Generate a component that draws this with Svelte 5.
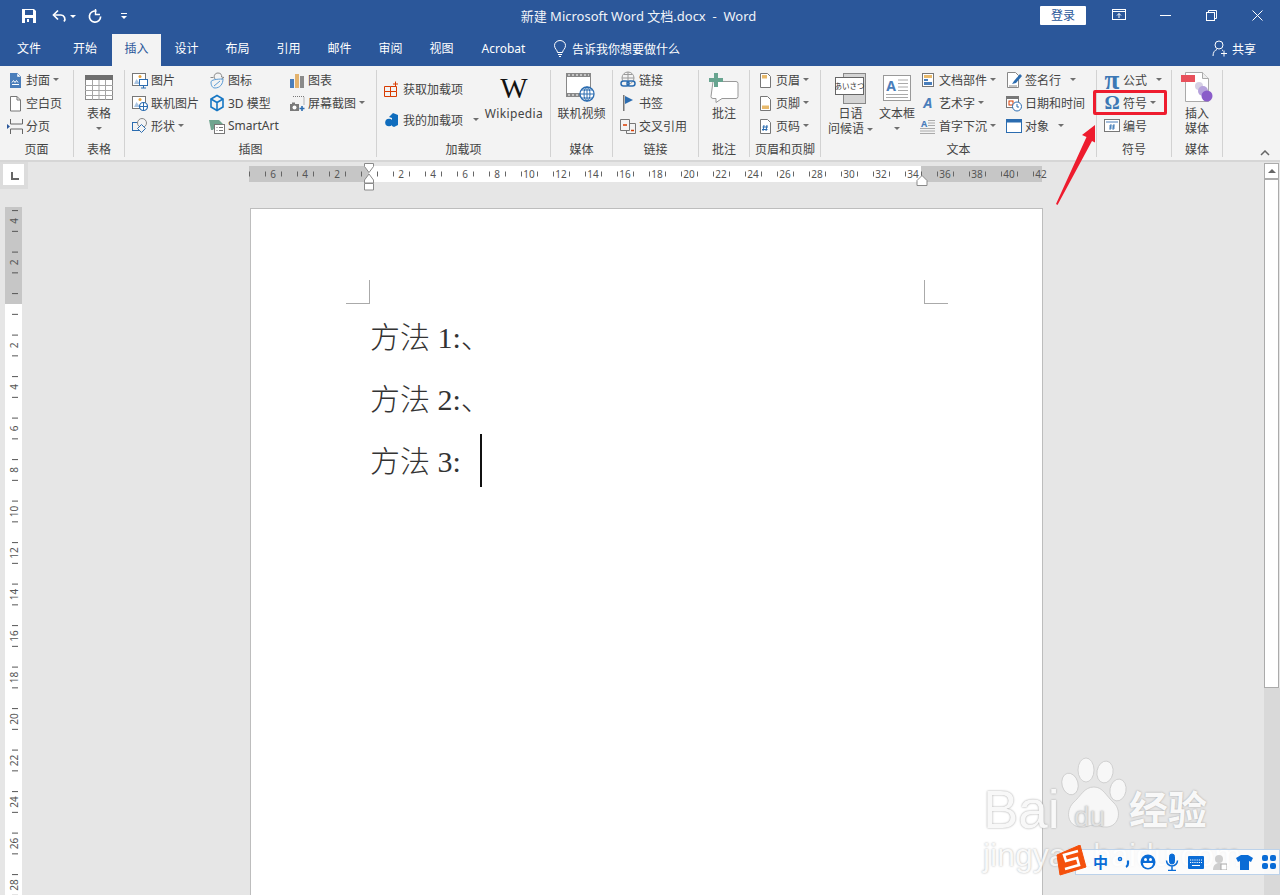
<script lang="ts">
	const tabs = ['文件', '开始', '插入', '设计', '布局', '引用', '邮件', '审阅', '视图', 'Acrobat'];
	const tabWidths = [58, 54, 49, 51, 51, 51, 51, 51, 51, 73];

	// horizontal ruler: 16px per character unit, 0 sits at x=120 of the strip
	const hUnits = Array.from({ length: 50 }, (_, i) => i - 7);
	const hNums = hUnits.filter((n) => n % 2 === 0 && n !== 0);
	// vertical ruler: 20.75px per unit, 0 sits at y=97 of the strip
	const vUnits = Array.from({ length: 35 }, (_, i) => i - 5);
	const vNums = vUnits.filter((n) => n % 2 === 0 && n !== 0 && n >= -4);
	const hx = (n: number) => 120 + n * 16;
	const vy = (n: number) => 97 + n * 20.75;

	const lines = ['方法 1:、', '方法 2:、'];
</script>

<div class="app">
	<header class="titlebar">
		<div class="qat">
			<svg width="16" height="16" viewBox="0 0 16 16"><path d="M1 1h12l2 2v12H1z" fill="#fff"/><rect x="4" y="2" width="8" height="5" fill="#2b579a"/><rect x="4" y="10" width="8" height="5" fill="#2b579a"/><rect x="6" y="11" width="2" height="3" fill="#fff"/></svg>
			<svg class="undo" width="16" height="16" viewBox="0 0 16 16" fill="none" stroke="#fff" stroke-width="1.7"><path d="M3 7h7a4 4 0 0 1 3 6.500"/><path d="M7 2.500 2.500 7 7 11.500"/></svg>
			<i class="caret light"></i>
			<svg class="redo" width="16" height="16" viewBox="0 0 16 16" fill="none" stroke="#fff" stroke-width="1.7"><path d="M9.500 3.200A5.600 5.600 0 1 0 13.600 8.500"/><path d="M8.500 1v5.500H13" stroke-width="1.400"/></svg>
			<svg class="custom" width="8" height="8" viewBox="0 0 8 8" fill="#fff"><rect x="1" y="1" width="6" height="1"/><path d="M1 4h6L4 7z"/></svg>
		</div>
		<div class="doc-title">新建 Microsoft Word 文档.docx  -  Word</div>
		<div class="winctl">
			<button class="login">登录</button>
			<span class="wbtn"><svg width="14" height="12" viewBox="0 0 14 12" fill="none" stroke="#fff"><rect x=".5" y=".5" width="13" height="10"/><path d="M.5 2.500h13M7 9V4.500M5 6.500l2-2 2 2"/></svg></span>
			<span class="wbtn"><svg width="11" height="11" viewBox="0 0 11 11" stroke="#fff"><path d="M0 5.500h11"/></svg></span>
			<span class="wbtn"><svg width="11" height="11" viewBox="0 0 11 11" fill="none" stroke="#fff"><rect x=".5" y="2.500" width="8" height="8"/><path d="M2.500 2.500v-2h8v8h-2"/></svg></span>
			<span class="wbtn"><svg width="11" height="11" viewBox="0 0 11 11" stroke="#fff"><path d="M.5.5l10 10M10.500.5l-10 10"/></svg></span>
		</div>
	</header>

	<nav class="tabs">
		{#each tabs as t, i}
			<span class="tab" class:active={t === '插入'} style="width: {tabWidths[i]}px">{t}</span>
		{/each}
		<span class="tell">
			<svg width="14" height="18" viewBox="0 0 14 18" fill="none" stroke="#fff"><path d="M4.500 12.500c0-2.500-3-3.500-3-7a5.500 5 0 0 1 11 0c0 3.500-3 4.500-3 7zM5 14.500h4M6 16.500h2"/></svg>
			告诉我你想要做什么
		</span>
		<span class="share">
			<svg width="16" height="17" viewBox="0 0 16 17" fill="none" stroke="#fff"><circle cx="7" cy="5" r="4"/><path d="M1 16c0-4 2-6 4-6.500M10 10l1 .5M9 13.500h6M12 10.500v6"/></svg>
			共享
		</span>
	</nav>

	<section class="ribbon">
		<div class="grp w-page">
			<div class="body">
				<div class="col">
					<div class="row"><svg width="16" height="18" viewBox="0 0 16 18"><path d="M3 2h7l4 4v11H3z" fill="#4a7ebb"/><path d="M10 2v4h4z" fill="#fff" stroke="#4a7ebb" stroke-width=".5"/><path d="M5 11.500l1.500-2 1.500 2 1.500-2 1.500 2M5 13.500h7" stroke="#fff" fill="none"/></svg>封面<i class="caret"></i></div>
					<div class="row"><svg width="16" height="18" viewBox="0 0 16 18"><path d="M3.500 2.500h6.500l3.500 3.500v11h-10z" fill="#fff" stroke="#777"/><path d="M10 2.500v3.500h3.500" fill="none" stroke="#777"/></svg>空白页</div>
					<div class="row"><svg width="16" height="18" viewBox="0 0 16 18" fill="none" stroke="#666"><path d="M3.500 2v5h12V2M3.500 17v-5h12v5"/><path d="M0 7l3 2.500L0 12z" fill="#2b579a" stroke="none"/></svg>分页</div>
				</div>
			</div>
			<div class="lbl">页面</div>
		</div>

		<div class="grp w-table">
			<div class="body center">
				<div class="big">
					<div class="big-ic"><svg width="28" height="26" viewBox="0 0 28 26"><rect x=".5" y=".5" width="27" height="24" fill="#fff" stroke="#8a8a8a"/><rect x="0" y="0" width="28" height="5" fill="#6e6e6e"/><path d="M0 10.500h28M0 15.500h28M0 20.500h28M7.500 5v20M14 5v20M20.500 5v20" stroke="#a5a5a5"/></svg></div>
					<span>表格</span>
					<i class="caret"></i>
				</div>
			</div>
			<div class="lbl">表格</div>
		</div>

		<div class="grp w-illus">
			<div class="body">
				<div class="col c77">
					<div class="row"><svg width="16" height="18" viewBox="0 0 16 18"><rect x=".5" y="2.500" width="13" height="12" fill="#fff" stroke="#777"/><circle cx="8" cy="5.500" r="1.500" fill="#e8a33d"/><path d="M2 13l2.500-5L8 13z" fill="#a9c3e0"/><rect x="7.500" y="8.500" width="8" height="6" fill="#fff" stroke="#2b6cb0"/><path d="M9 17h5M11.500 15v2" stroke="#2b6cb0"/></svg>图片</div>
					<div class="row"><svg width="16" height="18" viewBox="0 0 16 18"><rect x=".5" y="2.500" width="13" height="12" fill="#fff" stroke="#777"/><circle cx="8" cy="5.500" r="1.500" fill="#e8a33d"/><path d="M2 13l2.500-5L8 13z" fill="#a9c3e0"/><circle cx="11.500" cy="12.500" r="4" fill="#fff" stroke="#2b6cb0" stroke-width="1.200"/><path d="M7.500 12.500h8M11.500 8.500v8" stroke="#2b6cb0"/></svg>联机图片</div>
					<div class="row"><svg width="16" height="18" viewBox="0 0 16 18" fill="none"><rect x=".5" y="5.500" width="9" height="8" stroke="#2b6cb0"/><circle cx="10" cy="6" r="4.500" stroke="#888" fill="#f3f3f3"/><path d="M9.500 7.500l4 4-4 4-4-4z" stroke="#2b6cb0" fill="#f3f3f3"/></svg>形状<i class="caret"></i></div>
				</div>
				<div class="col c80">
					<div class="row"><svg width="16" height="18" viewBox="0 0 16 18" fill="none" stroke="#8a8a8a"><path d="M6 8c-2-3 0-6 3-6s4 2 3.500 4l2.500.5-2.500 1.500"/><path d="M1.500 6.500h3"/><path d="M2 11c0-2 5-3 12-3 0 5-3 9-8 9-3 0-4-3-4-6z" stroke="#5b9bd5"/><path d="M5 15l6-5" stroke="#5b9bd5"/></svg>图标</div>
					<div class="row"><svg width="16" height="18" viewBox="0 0 16 18" fill="none" stroke="#1777c4" stroke-width="1.600"><path d="M8 1.500l6 3.500v8l-6 3.500-6-3.500V5z"/><path d="M2 5l6 3.500L14 5M8 8.500v8"/></svg>3D 模型</div>
					<div class="row"><svg width="16" height="18" viewBox="0 0 16 18"><path d="M0 3h10l4 4H8l-4 6H2z" fill="#6fa58f"/><rect x="5.500" y="7.500" width="10" height="9" fill="#fff" stroke="#777"/><path d="M7.500 10.500h1M10 10.500h4M7.500 13.500h1M10 13.500h4" stroke="#777"/></svg>SmartArt</div>
				</div>
				<div class="col">
					<div class="row"><svg width="16" height="18" viewBox="0 0 16 18"><rect x="1" y="8" width="4" height="9" fill="#4a7ebb"/><rect x="6" y="3" width="4" height="14" fill="#e3b26d"/><rect x="11" y="5" width="4" height="12" fill="#8a8a8a"/></svg>图表</div>
					<div class="row"><svg width="16" height="18" viewBox="0 0 16 18"><path d="M4 2.500h11v9" fill="none" stroke="#777" stroke-dasharray="1 1"/><rect x="1" y="10" width="9" height="7" fill="#7a7a7a"/><rect x="3" y="8.500" width="3" height="2" fill="#7a7a7a"/><circle cx="5.500" cy="13.500" r="2" fill="#fff"/><path d="M10.500 14.500h5M13 12v5" stroke="#2b6cb0" stroke-width="1.600"/></svg>屏幕截图<i class="caret"></i></div>
				</div>
			</div>
			<div class="lbl">插图</div>
		</div>

		<div class="grp w-addin">
			<div class="body">
				<div class="col c100 tall">
					<div class="row"><svg width="16" height="18" viewBox="0 0 16 18" fill="none" stroke="#d83b01"><path d="M.5 6.500h6v5h-6zM.5 11.500h6v5h-6zM6.500 11.500h6v5h-6zM6.500 6.500h6v5"/><path d="M11.500 1.500v5M9 4h5"/></svg>获取加载项</div>
					<div class="row"><svg width="16" height="18" viewBox="0 0 16 18"><path d="M9 2l5 2v10l-4 2-2-1V7L5 6z" fill="#0f6cbd"/><circle cx="5" cy="11.500" r="3.800" fill="#0f6cbd"/></svg>我的加载项<i class="caret far"></i></div>
				</div>
				<div class="big w60">
					<div class="big-ic"><span class="wiki-w">W</span></div>
					<span class="wiki-name">Wikipedia</span>
				</div>
			</div>
			<div class="lbl">加载项</div>
		</div>

		<div class="grp w-video">
			<div class="body center">
				<div class="big">
					<div class="big-ic"><svg width="30" height="30" viewBox="0 0 30 30"><rect x=".5" y=".5" width="24" height="23" fill="#fff" stroke="#888"/><rect x="0" y="0" width="25" height="4" fill="#888"/><rect x="0" y="20" width="25" height="4" fill="#888"/><path d="M2 2h21M2 22h21" stroke="#fff" stroke-dasharray="2 2"/><circle cx="21" cy="21" r="7" fill="#fff" stroke="#2b6cb0" stroke-width="1.300"/><path d="M14 21h14M21 14v14M16 17h10M16 25h10" stroke="#2b6cb0"/><ellipse cx="21" cy="21" rx="3" ry="7" fill="none" stroke="#2b6cb0"/></svg></div>
					<span>联机视频</span>
				</div>
			</div>
			<div class="lbl">媒体</div>
		</div>

		<div class="grp w-links">
			<div class="body">
				<div class="col">
					<div class="row"><svg width="16" height="18" viewBox="0 0 16 18" fill="none"><circle cx="8" cy="7" r="6" stroke="#999"/><path d="M2 7h12M8 1v12M4 3.500h8" stroke="#999"/><rect x="1" y="10" width="8" height="5" rx="2.500" fill="#f3f3f3" stroke="#2b6cb0" stroke-width="1.500"/><rect x="7" y="10" width="8" height="5" rx="2.500" stroke="#2b6cb0" stroke-width="1.500"/></svg>链接</div>
					<div class="row"><svg width="16" height="18" viewBox="0 0 16 18"><rect x="3" y="1" width="1.500" height="16" fill="#777"/><path d="M5 2l8 4-8 4z" fill="#2b6cb0"/></svg>书签</div>
					<div class="row"><svg width="16" height="18" viewBox="0 0 16 18" fill="none" stroke="#777"><path d="M.5 2.500h9v11h-9z"/><path d="M9.500 6.500h6v10h-9v-3"/><path d="M3 8h4" stroke="#d83b01" stroke-width="1.500"/><path d="M11 13.500h3" stroke="#d83b01" stroke-width="1.500"/></svg>交叉引用</div>
				</div>
			</div>
			<div class="lbl">链接</div>
		</div>

		<div class="grp w-comment">
			<div class="body center">
				<div class="big">
					<div class="big-ic"><svg width="30" height="30" viewBox="0 0 30 30"><path d="M4 8.500h23a2 2 0 0 1 2 2v13a2 2 0 0 1-2 2H13l-6 4v-4H4a2 2 0 0 1-2-2z" fill="#fff" stroke="#999"/><path d="M0 5h5V0h4v5h5v4H9v5H5V9H0z" fill="#68a490"/></svg></div>
					<span>批注</span>
				</div>
			</div>
			<div class="lbl">批注</div>
		</div>

		<div class="grp w-header">
			<div class="body">
				<div class="col">
					<div class="row"><svg width="16" height="18" viewBox="0 0 16 18"><path d="M3.500 2.500h7l3 3v11h-10z" fill="#fff" stroke="#777"/><rect x="5" y="4" width="5" height="3.500" fill="#e8b96b"/></svg>页眉<i class="caret"></i></div>
					<div class="row"><svg width="16" height="18" viewBox="0 0 16 18"><path d="M3.500 2.500h7l3 3v11h-10z" fill="#fff" stroke="#777"/><rect x="5" y="11.500" width="7" height="3.500" fill="#e8b96b"/></svg>页脚<i class="caret"></i></div>
					<div class="row"><svg width="16" height="18" viewBox="0 0 16 18"><path d="M3.500 2.500h7l3 3v11h-10z" fill="#fff" stroke="#777"/><path d="M7 8l-1 6M10 8l-1 6M5.500 10h5.500M5 12.500h5.500" stroke="#2b6cb0"/></svg>页码<i class="caret"></i></div>
				</div>
			</div>
			<div class="lbl">页眉和页脚</div>
		</div>

		<div class="grp w-text">
			<div class="body">
				<div class="big w47">
					<div class="big-ic"><svg width="31" height="31" viewBox="0 0 31 31"><rect x="8.500" y=".5" width="22" height="30" fill="#d4d4d4" stroke="#888"/><rect x=".5" y="4.500" width="28" height="17" fill="#fff" stroke="#666"/><text x="14.500" y="16" text-anchor="middle" class="aisatsu">あいさつ</text></svg></div>
					<span>日语</span>
					<span>问候语<i class="caret"></i></span>
				</div>
				<div class="big w46">
					<div class="big-ic"><svg width="28" height="26" viewBox="0 0 28 26"><rect x=".5" y=".5" width="27" height="25" fill="#fff" stroke="#999"/><text x="8" y="16" text-anchor="middle" class="a-blue">A</text><path d="M15 5h10M15 8.500h10M15 12h10M15 15.500h10M3 19.500h22M3 22.500h22" stroke="#aaa"/></svg></div>
					<span>文本框</span>
					<i class="caret"></i>
				</div>
				<div class="col c86">
					<div class="row"><svg width="16" height="18" viewBox="0 0 16 18"><rect x="2.500" y="2.500" width="11" height="13" fill="#fff" stroke="#777"/><rect x="4" y="4" width="8" height="3" fill="#e8b96b"/><rect x="4" y="8" width="4" height="2" fill="#4a7ebb"/><rect x="4" y="11" width="8" height="3" fill="#4a7ebb"/></svg>文档部件<i class="caret"></i></div>
					<div class="row"><svg width="16" height="18" viewBox="0 0 16 18"><text x="8" y="14" text-anchor="middle" class="a-art">A</text></svg>艺术字<i class="caret"></i></div>
					<div class="row"><svg width="16" height="18" viewBox="0 0 16 18"><text x="4" y="10" text-anchor="middle" class="a-drop">A</text><path d="M8 3.500h7M8 6h7M8 8.500h7M0 11.500h15M0 14h15M0 16.500h15" stroke="#aaa"/></svg>首字下沉<i class="caret"></i></div>
				</div>
				<div class="col">
					<div class="row"><svg width="16" height="18" viewBox="0 0 16 18"><path d="M1.500 1.500h8l3 3v12h-11z" fill="#fff" stroke="#888"/><path d="M6 13l2-3 6-7 2 2-6 7z" fill="#2b6cb0"/><path d="M3 15h8" stroke="#888"/></svg>签名行<i class="caret far2"></i></div>
					<div class="row"><svg width="16" height="18" viewBox="0 0 16 18"><rect x=".5" y="2.500" width="12" height="11" fill="#fff" stroke="#777"/><rect x="0" y="2" width="13" height="3" fill="#777"/><rect x="3" y="7" width="4" height="4" fill="none" stroke="#d83b01"/><circle cx="11" cy="12.500" r="4.500" fill="#fff" stroke="#2b6cb0"/><path d="M11 10v3h2" stroke="#2b6cb0" fill="none"/></svg>日期和时间</div>
					<div class="row"><svg width="16" height="18" viewBox="0 0 16 18"><rect x=".5" y="2.500" width="15" height="13" fill="#fff" stroke="#2b6cb0"/><rect x="0" y="2" width="16" height="3.500" fill="#2b6cb0"/></svg>对象<i class="caret far2"></i></div>
				</div>
			</div>
			<div class="lbl">文本</div>
		</div>

		<div class="grp w-symbol">
			<div class="body">
				<div class="col">
					<div class="row"><span class="sym pi">π</span>公式<i class="caret far2"></i></div>
					<div class="row marked"><span class="sym">Ω</span>符号<i class="caret"></i></div>
					<div class="row"><svg width="16" height="18" viewBox="0 0 16 18"><rect x=".5" y="2.500" width="15" height="12" fill="#fff" stroke="#777"/><path d="M2 5h12" stroke="#4a7ebb"/><path d="M7 7l-1 6M10 7l-1 6M5 9h6M5 11h6" stroke="#2b6cb0" stroke-width=".8"/></svg>编号</div>
				</div>
			</div>
			<div class="lbl">符号</div>
		</div>

		<div class="grp w-embed">
			<div class="body center">
				<div class="big">
					<div class="big-ic"><svg width="33" height="34" viewBox="0 0 33 34"><path d="M4.500 1.500h17l6 6v23h-23z" fill="#fff" stroke="#aaa"/><path d="M21.500 1.500v6h6" fill="#eee" stroke="#aaa"/><rect x="0" y="4" width="14" height="7" fill="#e8505b"/><circle cx="18" cy="15" r="4" fill="#d5cfe4"/><circle cx="22" cy="20" r="5" fill="#b6a2dc"/><circle cx="26" cy="25" r="5.500" fill="#8a5cc9"/></svg></div>
					<span>插入</span>
					<span>媒体</span>
				</div>
			</div>
			<div class="lbl">媒体</div>
		</div>

		<svg class="collapse" width="10" height="6" viewBox="0 0 10 6" fill="none" stroke="#666" stroke-width="1.500"><path d="M1 5l4-4 4 4"/></svg>
	</section>

	<main class="workspace">
		<div class="docarea">
			<div class="hrow">
				<div class="tabstop"><span class="tabstop-box"><i></i></span></div>
				<div class="hruler-wrap">
					<svg class="hruler" width="800" height="16" viewBox="0 0 800 16">
						<rect width="793" height="16" fill="#fff"/>
						<rect width="120" height="16" fill="#c6c6c6"/>
						<rect x="672" width="121" height="16" fill="#c6c6c6"/>
						{#each hUnits as n}
							<path d="M{hx(n) - 7.500} 5.500v5" stroke="#666"/>
						{/each}
						{#each hNums as n}
							<text x={hx(n)} y="12" text-anchor="middle" class="rnum">{Math.abs(n)}</text>
						{/each}
					</svg>
					<svg class="marker-l" width="12" height="28" viewBox="0 0 12 28" fill="#fff" stroke="#8a8a8a"><path d="M1.500.5h9v3l-4.500 6-4.500-6zM6 11l4.500 6v3h-9v-3zM1.500 20.500h9v6.500h-9z"/></svg>
					<svg class="marker-r" width="12" height="11" viewBox="0 0 12 11" fill="#fff" stroke="#8a8a8a"><path d="M6 .5l5 5v5H1v-5z"/></svg>
				</div>
			</div>
			<div class="vrow">
				<svg class="vruler" width="17" height="690" viewBox="0 0 17 690">
					<rect width="17" height="690" fill="#fff"/>
					<rect width="17" height="97" fill="#c6c6c6"/>
					{#each vUnits as n}
						<path d="M7 {vy(n) - 10.400}h6" stroke="#555"/>
					{/each}
					{#each vNums as n}
						<text transform="translate(13 {vy(n)}) rotate(-90)" text-anchor="middle" class="rnum">{Math.abs(n)}</text>
					{/each}
				</svg>
				<article class="page">
					<div class="crops"><i class="crop left"></i><i class="crop right"></i></div>
					{#each lines as l}
						<p>{l}</p>
					{/each}
					<p>方法 3: <span class="cursor"></span></p>
				</article>
			</div>
		</div>
		<aside class="scrollbar">
			<div class="sb-up"><i></i></div>
			<div class="sb-thumb"></div>
			<div class="sb-track"></div>
		</aside>
	</main>

	<svg class="arrow" width="50" height="90" viewBox="0 0 50 90"><path d="M43 2 30 12l4.500 2L4 81l1.500 1L40 18l3 1.500z" fill="#ee1c2e"/></svg>

	<div class="watermark">
		<svg class="paw" width="72" height="74" viewBox="0 0 72 74" fill="#f7f7f7" stroke="#c4c4c4" stroke-width=".7">
			<ellipse cx="11" cy="27" rx="8" ry="11" transform="rotate(-15 11 27)"/>
			<ellipse cx="27" cy="13" rx="8" ry="12"/>
			<ellipse cx="46" cy="15" rx="8" ry="11" transform="rotate(10 46 15)"/>
			<ellipse cx="59" cy="33" rx="8" ry="11" transform="rotate(10 59 33)"/>
			<path d="M35 30c9 0 12 9 20 16 8 8 5 23-7 24-6 .5-8-2-13-2s-8 3-14 2C9 69 6 55 14 46c8-7 11-16 21-16z"/>
		</svg>
		<span class="wm-bai">Bai</span>
		<span class="wm-du">du</span>
		<span class="wm-jy">经验</span>
		<span class="wm-url">jingyan.baidu.com</span>
	</div>

	<div class="ime">
		<svg class="ime-logo" width="31" height="31" viewBox="0 0 31 31"><path d="M1 10 24 0l6 22-26 8z" fill="#f4500c" stroke="#f4500c" stroke-linejoin="round"/><path d="M22 6 8 10l2 6 11-3 2 7-14 4" fill="none" stroke="#fff" stroke-width="2.600"/></svg>
		<b class="ime-zh">中</b>
		<svg width="14" height="16" viewBox="0 0 14 16" fill="none" stroke="#0a6cd6" stroke-width="1.500"><circle cx="3" cy="5" r="1.500"/><path d="M11 6.500v3c0 1.500-1 3-2 3.500" stroke-width="2.200"/></svg>
		<svg width="16" height="16" viewBox="0 0 16 16"><circle cx="8" cy="8" r="7.500" fill="#0a6cd6"/><circle cx="5.500" cy="5.500" r="1.500" fill="#fff"/><circle cx="10.500" cy="5.500" r="1.500" fill="#fff"/><path d="M3 9h10a5 5 0 0 1-10 0z" fill="#fff"/></svg>
		<svg width="14" height="18" viewBox="0 0 14 18" fill="none" stroke="#0a6cd6"><rect x="4.500" y="1" width="5" height="10" rx="2.500" fill="#0a6cd6"/><path d="M1.500 7.500a5.500 5.500 0 0 0 11 0M7 13v4M3 17.500h8" stroke-width="1.500"/></svg>
		<svg width="16" height="13" viewBox="0 0 16 13"><rect width="16" height="13" rx="1" fill="#0a6cd6"/><path d="M2 4h12M2 6.500h12" stroke="#fff" stroke-dasharray="1.200 1"/><path d="M4 9.500h8" stroke="#fff"/></svg>
		<svg width="14" height="15" viewBox="0 0 14 15" fill="#cfcfcf"><circle cx="6" cy="4" r="4"/><path d="M0 15c0-5 3-7 6-7s6 2 6 7z"/><rect x="8" y="9" width="6" height="6" fill="#fff" stroke="#aaa"/></svg>
		<svg width="17" height="15" viewBox="0 0 17 15" fill="#0a6cd6"><path d="M5 0h7l5 3-2 4-2-1v9H4V6L2 7 0 3z"/></svg>
		<svg width="14" height="14" viewBox="0 0 14 14" fill="#0a6cd6"><rect width="6" height="6" rx="2"/><rect x="8" width="6" height="6" rx="2"/><rect y="8" width="6" height="6" rx="2"/><rect x="8" y="8" width="6" height="6" rx="2"/></svg>
	</div>
</div>

<style>
	:global(body) {
		margin: 0;
		background: #e6e6e6;
	}

	.app {
		position: relative;
		width: 1280px;
		height: 895px;
		overflow: hidden;
		display: flex;
		flex-direction: column;
		font-family: "Noto Sans", "Noto Sans CJK SC", sans-serif;
		font-size: 12px;
		color: #444;
	}

	i {
		display: block;
	}

	/* title bar */
	.titlebar {
		height: 34px;
		flex: none;
		box-sizing: border-box;
		padding-bottom: 4px;
		background: #2b579a;
		display: grid;
		grid-template-columns: 1fr auto 1fr;
		align-items: center;
		color: #fff;
	}

	.qat {
		display: flex;
		align-items: center;
		padding-left: 21px;
		padding-top: 2px;
	}

	.undo {
		margin-left: 14px;
	}

	.redo {
		margin-left: 11px;
	}

	.custom {
		margin-left: 17px;
	}

	.caret {
		width: 0;
		height: 0;
		border-left: 3px solid transparent;
		border-right: 3px solid transparent;
		border-top: 3px solid #6e6e6e;
		flex: none;
		display: inline-block;
		vertical-align: middle;
	}

	.caret.light {
		border-top-color: #fff;
		margin-left: 3px;
	}

	.doc-title {
		white-space: pre;
		padding-right: 3px;
		font-size: 13px;
		color: #f0f3f8;
	}

	.winctl {
		display: flex;
		justify-content: flex-end;
		align-items: center;
	}

	.login {
		width: 46px;
		height: 19px;
		margin-right: 10px;
		padding: 0;
		border: 0;
		border-radius: 1px;
		background: #fff;
		color: #2b579a;
		font: inherit;
	}

	.wbtn {
		width: 46px;
		display: flex;
		justify-content: center;
	}

	/* tabs */
	.tabs {
		height: 32px;
		flex: none;
		background: #2b579a;
		display: flex;
		align-items: stretch;
		color: #fff;
	}

	.tab {
		display: flex;
		align-items: center;
		justify-content: center;
		box-sizing: border-box;
		padding-bottom: 4px;
	}

	.tab.active {
		background: #f3f3f3;
		color: #2b579a;
	}

	.tell {
		display: flex;
		align-items: center;
		gap: 5px;
		margin-left: 13px;
		padding-bottom: 3px;
	}

	.share {
		margin-left: auto;
		margin-right: 24px;
		display: flex;
		align-items: center;
		gap: 4px;
		padding-bottom: 3px;
	}

	/* ribbon */
	.ribbon {
		height: 96px;
		flex: none;
		box-sizing: border-box;
		padding: 4px 0 0;
		background: #f3f3f3;
		border-bottom: 2px solid #d6d6d6;
		display: flex;
	}

	.grp {
		box-sizing: border-box;
		height: 87px;
		flex: none;
		border-right: 1px solid #d2d2d2;
		display: flex;
		flex-direction: column;
		padding-left: 7px;
	}

	.w-page { width: 74px; }
	.w-table { width: 51px; padding-left: 0; }
	.w-illus { width: 252px; }
	.w-addin { width: 174px; }
	.w-video { width: 62px; padding-left: 0; }
	.w-links { width: 86px; }
	.w-comment { width: 51px; padding-left: 0; }
	.w-header { width: 71px; }
	.w-text { width: 276px; padding-left: 6px; }
	.w-symbol { width: 75px; }
	.w-embed { width: 51px; padding-left: 0; }

	.body {
		flex: 1;
		display: flex;
		margin-top: -2px;
		min-height: 0;
	}

	.body.center {
		justify-content: center;
	}

	.lbl {
		height: 14px;
		line-height: 14px;
		text-align: center;
		margin-left: -7px;
		color: #444;
		white-space: nowrap;
	}

	.w-table .lbl,
	.w-video .lbl,
	.w-comment .lbl,
	.w-embed .lbl {
		margin-left: 0;
	}

	.w-text .lbl {
		margin-left: -6px;
	}

	.col {
		flex: none;
		display: flex;
		flex-direction: column;
	}

	.c77 { width: 77px; }
	.c80 { width: 80px; }
	.c86 { width: 86px; }
	.c100 { width: 100px; }

	.col.tall {
		padding-top: 5px;
	}

	.col.tall .row {
		height: 31px;
	}

	.row {
		height: 23px;
		display: flex;
		align-items: center;
		white-space: nowrap;
		gap: 3px;
	}

	.row svg {
		flex: none;
	}

	.row .caret.far {
		margin-left: 7px;
	}

	.row .caret.far2 {
		margin-left: 6px;
	}

	.sym {
		width: 16px;
		text-align: center;
		color: #3c78b5;
		font-family: "Liberation Serif", serif;
		font-size: 19px;
		font-weight: 700;
		line-height: 18px;
	}

	.sym.pi {
		font-size: 27px;
		line-height: 16px;
	}

	/* red highlight drawn on top of the screenshot */
	.marked {
		position: relative;
	}

	.marked::after {
		content: '';
		position: absolute;
		left: -11px;
		top: -1px;
		width: 68px;
		height: 19px;
		border: 3.5px solid #ee1c2e;
		border-radius: 2px;
	}

	.big {
		display: flex;
		flex-direction: column;
		align-items: center;
		line-height: 15px;
		white-space: nowrap;
		flex: none;
	}

	.w60 { width: 60px; }
	.w47 { width: 47px; }
	.w46 { width: 46px; }

	.big .caret {
		margin: 6px 0 0;
	}

	.big span .caret {
		margin: 0 0 0 3px;
	}

	.big-ic {
		height: 38px;
		padding-top: 2px;
		box-sizing: border-box;
		display: flex;
		align-items: center;
		justify-content: center;
	}

	.wiki-w {
		font-family: "Liberation Serif", serif;
		font-size: 29px;
		line-height: 28px;
		color: #111;
	}

	.wiki-name {
		letter-spacing: 0.35px;
	}

	.aisatsu {
		font-size: 7.5px;
		fill: #333;
	}

	.a-blue {
		font-size: 14px;
		font-weight: 700;
		fill: #4a7ebb;
	}

	.a-art {
		font-size: 14px;
		font-weight: 700;
		font-style: italic;
		fill: #4a7ebb;
	}

	.a-drop {
		font-size: 9px;
		font-weight: 700;
		fill: #4a7ebb;
	}

	.collapse {
		align-self: flex-end;
		margin: 0 10px 4px auto;
	}

	/* document area */
	.workspace {
		flex: 1;
		min-height: 0;
		display: flex;
		background: #e6e6e6;
	}

	.docarea {
		width: 1264px;
		flex: none;
	}

	.hrow {
		height: 46px;
		display: flex;
	}

	.tabstop {
		width: 28px;
		height: 27px;
		background: #dcdcdc;
		box-sizing: border-box;
		padding: 2px 0 0 3px;
	}

	.tabstop-box {
		display: block;
		width: 21px;
		height: 21px;
		background: #fff;
		position: relative;
	}

	.tabstop-box i {
		position: absolute;
		left: 8px;
		top: 8px;
		width: 6px;
		height: 6px;
		border-left: 2px solid #666;
		border-bottom: 2px solid #666;
	}

	.hruler-wrap {
		position: relative;
		margin: 4px 0 0 221px;
		width: 793px;
		height: 16px;
	}

	.hruler {
		display: block;
	}

	.marker-l {
		position: absolute;
		left: 114px;
		top: -3px;
	}

	.marker-r {
		position: absolute;
		left: 667px;
		top: 9px;
	}

	.rnum {
		font-size: 10px;
		fill: #555;
	}

	.vrow {
		display: flex;
		align-items: flex-start;
		padding-left: 5px;
	}

	.vruler {
		flex: none;
		margin-top: -1px;
	}

	.page {
		box-sizing: border-box;
		width: 793px;
		height: 700px;
		margin-left: 228px;
		background: #fff;
		border: 1px solid #bdbdbd;
		font-family: "Liberation Serif", "Noto Sans CJK SC", serif;
		font-size: 30px;
		font-weight: 300;
		color: #333;
	}

	.crops {
		display: flex;
		justify-content: space-between;
		padding: 71px 94px 0 95px;
		margin-bottom: 3px;
	}

	.crop {
		width: 23px;
		height: 23px;
		border: 0 solid #aaa;
	}

	.crop.left {
		border-width: 0 1px 1px 0;
	}

	.crop.right {
		border-width: 0 0 1px 1px;
	}

	.page p {
		margin: 0;
		height: 62px;
		line-height: 62px;
		padding-left: 119px;
		white-space: pre;
	}

	.cursor {
		display: inline-block;
		position: relative;
		top: -5px;
		width: 1.5px;
		height: 53px;
		margin-left: 12px;
		background: #111;
		vertical-align: middle;
	}

	/* scrollbar */
	.scrollbar {
		width: 16px;
		flex: none;
		display: flex;
		flex-direction: column;
		padding-top: 1px;
	}

	.sb-up {
		box-sizing: border-box;
		width: 15px;
		height: 16px;
		background: #fff;
		border: 1px solid #ababab;
		display: flex;
		align-items: center;
		justify-content: center;
	}

	.sb-up i {
		border-left: 4px solid transparent;
		border-right: 4px solid transparent;
		border-bottom: 4px solid #666;
	}

	.sb-thumb {
		box-sizing: border-box;
		width: 15px;
		height: 509px;
		background: #fff;
		border: 1px solid #ababab;
	}

	.sb-track {
		flex: 1;
		background: #d9d9d9;
	}

	/* overlays */
	.arrow {
		position: absolute;
		left: 1052px;
		top: 123px;
	}

	.watermark {
		position: absolute;
		left: 983px;
		top: 755px;
		width: 230px;
		height: 120px;
		pointer-events: none;
		color: #f8f8f8;
		text-shadow: 0 0 2px #999;
	}

	.paw {
		position: absolute;
		left: 76px;
		top: 2px;
	}

	.wm-bai {
		position: absolute;
		left: 0;
		top: 30px;
		font-family: "Liberation Sans", sans-serif;
		font-size: 53px;
		line-height: 50px;
	}

	.wm-du {
		position: absolute;
		left: 91px;
		top: 47px;
		font-family: "Liberation Sans", sans-serif;
		font-size: 28px;
		line-height: 30px;
		color: #e0e0e0;
	}

	.wm-jy {
		position: absolute;
		left: 146px;
		top: 30px;
		font-family: "Noto Sans CJK SC", sans-serif;
		font-size: 39px;
		line-height: 44px;
		font-weight: 700;
	}

	.wm-url {
		position: absolute;
		left: 0;
		top: 81px;
		font-family: "Liberation Sans", sans-serif;
		font-size: 32px;
		line-height: 38px;
		white-space: nowrap;
		opacity: 0.8;
	}

	.ime {
		position: absolute;
		left: 1075px;
		top: 849px;
		box-sizing: border-box;
		width: 205px;
		height: 26px;
		background: rgba(255, 255, 255, 0.85);
		border: 1px solid #bcd2ea;
		display: flex;
		align-items: center;
		gap: 9px;
		padding-left: 17px;
	}

	.ime-logo {
		position: absolute;
		left: -20px;
		top: -5px;
	}

	.ime-zh {
		color: #0a6cd6;
		font-size: 15px;
		line-height: 16px;
	}
</style>
